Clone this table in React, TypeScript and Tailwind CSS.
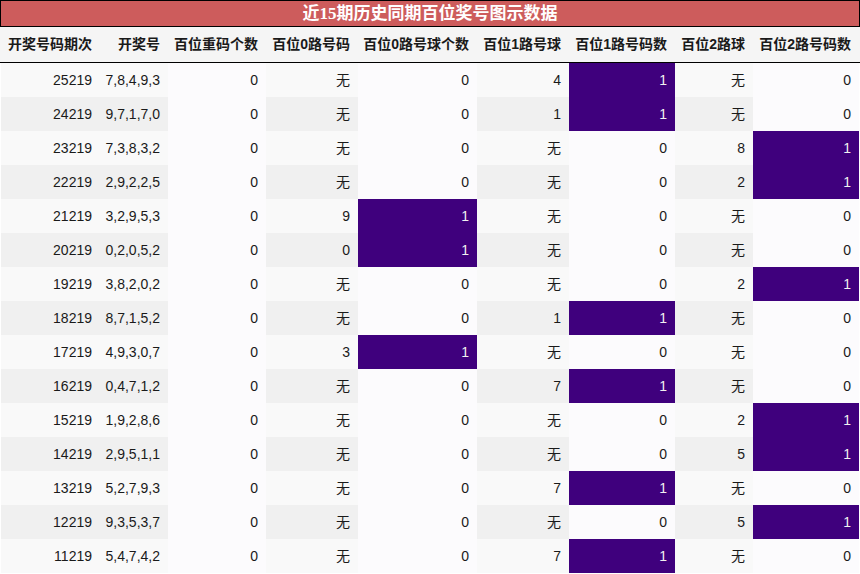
import React from "react";

type Row = [string, string, number, string, number, string, number, string, number];

const rows: Row[] = [
    ["25219", "7,8,4,9,3", 0, "无", 0, "4", 1, "无", 0],
    ["24219", "9,7,1,7,0", 0, "无", 0, "1", 1, "无", 0],
    ["23219", "7,3,8,3,2", 0, "无", 0, "无", 0, "8", 1],
    ["22219", "2,9,2,2,5", 0, "无", 0, "无", 0, "2", 1],
    ["21219", "3,2,9,5,3", 0, "9", 1, "无", 0, "无", 0],
    ["20219", "0,2,0,5,2", 0, "0", 1, "无", 0, "无", 0],
    ["19219", "3,8,2,0,2", 0, "无", 0, "无", 0, "2", 1],
    ["18219", "8,7,1,5,2", 0, "无", 0, "1", 1, "无", 0],
    ["17219", "4,9,3,0,7", 0, "3", 1, "无", 0, "无", 0],
    ["16219", "0,4,7,1,2", 0, "无", 0, "7", 1, "无", 0],
    ["15219", "1,9,2,8,6", 0, "无", 0, "无", 0, "2", 1],
    ["14219", "2,9,5,1,1", 0, "无", 0, "无", 0, "5", 1],
    ["13219", "5,2,7,9,3", 0, "无", 0, "7", 1, "无", 0],
    ["12219", "9,3,5,3,7", 0, "无", 0, "无", 0, "5", 1],
    ["11219", "5,4,7,4,2", 0, "无", 0, "7", 1, "无", 0],
];

const headers = [
    "开奖号码期次",
    "开奖号",
    "百位重码个数",
    "百位0路号码",
    "百位0路号球个数",
    "百位1路号球",
    "百位1路号码数",
    "百位2路球",
    "百位2路号码数",
];

const cols = "grid grid-cols-[99px_68px_98px_92px_119px_92px_106px_78px_106px]";

export default function App() {
    return (
        <div className="w-[860px] h-[574px] bg-white text-[14px] text-[#1a1a1a] font-['Liberation_Sans','Noto_Sans_CJK_SC',sans-serif]">
            {/* title */}
            <div className="h-[27px] border border-black bg-[#cd5c5c] flex items-center justify-center text-white text-[17px] font-bold font-['Liberation_Serif','Noto_Sans_CJK_SC',serif]">
                近15期历史同期百位奖号图示数据
            </div>

            {/* header */}
            <div className={`${cols} h-[36px] bg-[#f5f5f5] border-b border-black pl-px`}>
                {headers.map((h) => (
                    <div key={h} className="flex items-center justify-end pr-2 font-bold whitespace-nowrap">
                        {h}
                    </div>
                ))}
            </div>

            {/* body */}
            <div className="pl-px">
                {rows.map((r, i) => {
                    const stripe = i % 2 === 0 ? "bg-[#f9f9f9]" : "bg-[#f0f0f0]";
                    const heat = (v: number) =>
                        v === 1 ? "bg-[#3f007d] text-[#f1f1f1]" : "bg-[#fcfbfd]";
                    return (
                        <div key={r[0]} className={`${cols} h-[34px]`}>
                            <div className={`${stripe} flex items-center justify-end pr-2`}>{r[0]}</div>
                            <div className={`${stripe} flex items-center justify-end pr-2`}>{r[1]}</div>
                            <div className={`${heat(r[2])} flex items-center justify-end pr-2`}>{r[2]}</div>
                            <div className={`${stripe} flex items-center justify-end pr-2`}>{r[3]}</div>
                            <div className={`${heat(r[4])} flex items-center justify-end pr-2`}>{r[4]}</div>
                            <div className={`${stripe} flex items-center justify-end pr-2`}>{r[5]}</div>
                            <div className={`${heat(r[6])} flex items-center justify-end pr-2`}>{r[6]}</div>
                            <div className={`${stripe} flex items-center justify-end pr-2`}>{r[7]}</div>
                            <div className={`${heat(r[8])} flex items-center justify-end pr-2`}>{r[8]}</div>
                        </div>
                    );
                })}
            </div>
        </div>
    );
}
